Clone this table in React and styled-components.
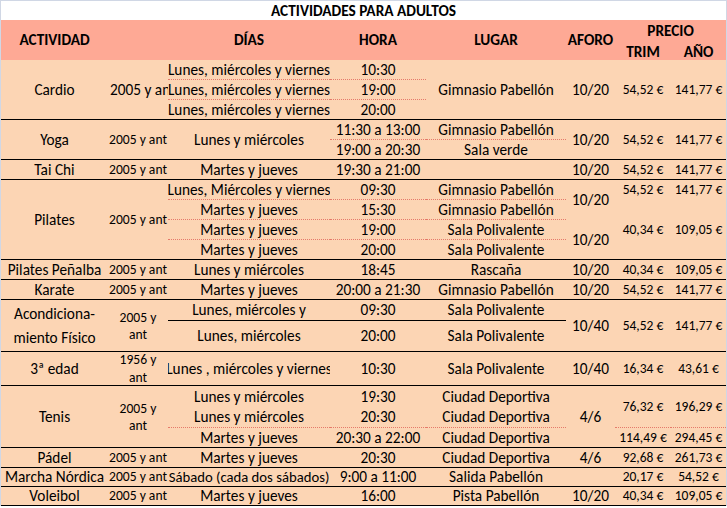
import React from 'react';
import styled, { createGlobalStyle } from 'styled-components';

const Global = createGlobalStyle`
  html, body { margin: 0; padding: 0; background: #ffffff; }
  body { font-family: "Carlito", "Lato", sans-serif; color: #000; }
`;

const Sheet = styled.div`
  width: 727px;
  box-sizing: border-box;
  border-top: 1px solid #d0d7e5;
  border-left: 1px solid #d0d7e5;
  border-right: 1px solid #d0d7e5;
  display: grid;
  grid-template-columns: 107px 60px 162px 96px 140px 49px 56px 55px;
  grid-template-rows:
    19px 20px 20px
    20px 20px 20px
    20px 20px
    20px
    20px 20px 20px 20px
    20px
    20px
    21px 31px
    34px
    21px 21px 20px
    20px
    19px
    19px;
  background: #fcd5b4;
`;

const Cell = styled.div`
  grid-column: ${(p) => p.$c} / span ${(p) => p.$cs || 1};
  grid-row: ${(p) => p.$r} / span ${(p) => p.$rs || 1};
  display: flex;
  align-items: center;
  justify-content: center;
  box-sizing: border-box;
  overflow: hidden;
  white-space: nowrap;
  font-size: 15.3px;
  line-height: 1;
`;

const TitleCell = styled(Cell)`
  background: #ffffff;
  font-weight: 700;
`;

const HeadCell = styled(Cell)`
  background: #fea995;
  font-weight: 700;
  align-items: ${(p) => (p.$pos === 'top' ? 'flex-end' : p.$pos === 'bottom' ? 'flex-start' : 'center')};
  padding-bottom: ${(p) => (p.$pos === 'top' ? '2px' : '0')};
  padding-top: ${(p) => (p.$pos === 'bottom' ? '4px' : '0')};
`;

const lineStyle = (l) =>
  l === 'solid'
    ? '1px solid #000'
    : l === 'dot'
    ? '1px dotted #e57a6a'
    : 'none';

const sizes = { sm: '13.5px', md: '13.6px', fit: '14.7px' };

const BodyCell = styled(Cell)`
  border-bottom: ${(p) => lineStyle(p.$line)};
  font-size: ${(p) => sizes[p.$size] || '15.3px'};
  justify-content: ${(p) => (p.$align === 'left' ? 'flex-start' : 'center')};
  padding-left: ${(p) => (p.$align === 'left' ? '2px' : '0')};
`;

const Lines = styled.div`
  display: flex;
  flex-direction: column;
  align-items: center;
  line-height: ${(p) => p.$lh}px;
`;

// c: column, r: row, t: text, rs/cs: spans, l: bottom line, s: size, lh: line height for wrapped text, a: alignment
const rows = [
  // Cardio
  { c: 1, r: 4, rs: 3, t: 'Cardio', l: 'solid' },
  { c: 2, r: 4, rs: 3, t: '2005 y ant', l: 'solid', a: 'left' },
  { c: 3, r: 4, t: 'Lunes, miércoles y viernes', l: 'dot' },
  { c: 3, r: 5, t: 'Lunes, miércoles y viernes', l: 'dot' },
  { c: 3, r: 6, t: 'Lunes, miércoles y viernes', l: 'solid' },
  { c: 4, r: 4, t: '10:30', l: 'dot' },
  { c: 4, r: 5, t: '19:00', l: 'dot' },
  { c: 4, r: 6, t: '20:00', l: 'solid' },
  { c: 5, r: 4, rs: 3, t: 'Gimnasio Pabellón', l: 'solid' },
  { c: 6, r: 4, rs: 3, t: '10/20', l: 'solid' },
  { c: 7, r: 4, rs: 3, t: '54,52 €', l: 'solid', s: 'sm' },
  { c: 8, r: 4, rs: 3, t: '141,77 €', l: 'solid', s: 'sm' },
  // Yoga
  { c: 1, r: 7, rs: 2, t: 'Yoga', l: 'solid' },
  { c: 2, r: 7, rs: 2, t: '2005 y ant', l: 'solid', s: 'md' },
  { c: 3, r: 7, rs: 2, t: 'Lunes y miércoles', l: 'solid' },
  { c: 4, r: 7, t: '11:30 a 13:00', l: 'dot' },
  { c: 4, r: 8, t: '19:00 a 20:30', l: 'solid' },
  { c: 5, r: 7, t: 'Gimnasio Pabellón', l: 'dot' },
  { c: 5, r: 8, t: 'Sala verde', l: 'solid' },
  { c: 6, r: 7, rs: 2, t: '10/20', l: 'solid' },
  { c: 7, r: 7, rs: 2, t: '54,52 €', l: 'solid', s: 'sm' },
  { c: 8, r: 7, rs: 2, t: '141,77 €', l: 'solid', s: 'sm' },
  // Tai Chi
  { c: 1, r: 9, t: 'Tai Chi', l: 'solid' },
  { c: 2, r: 9, t: '2005 y ant', l: 'solid', s: 'md' },
  { c: 3, r: 9, t: 'Martes y jueves', l: 'solid' },
  { c: 4, r: 9, t: '19:30 a 21:00', l: 'solid' },
  { c: 5, r: 9, t: '', l: 'solid' },
  { c: 6, r: 9, t: '10/20', l: 'solid' },
  { c: 7, r: 9, t: '54,52 €', l: 'solid', s: 'sm' },
  { c: 8, r: 9, t: '141,77 €', l: 'solid', s: 'sm' },
  // Pilates
  { c: 1, r: 10, rs: 4, t: 'Pilates', l: 'solid' },
  { c: 2, r: 10, rs: 4, t: '2005 y ant', l: 'solid', s: 'md' },
  { c: 3, r: 10, t: 'Lunes, Miércoles y viernes', l: 'dot' },
  { c: 3, r: 11, t: 'Martes y jueves', l: 'dot' },
  { c: 3, r: 12, t: 'Martes y jueves', l: 'dot' },
  { c: 3, r: 13, t: 'Martes y jueves', l: 'solid' },
  { c: 4, r: 10, t: '09:30', l: 'dot' },
  { c: 4, r: 11, t: '15:30', l: 'dot' },
  { c: 4, r: 12, t: '19:00', l: 'dot' },
  { c: 4, r: 13, t: '20:00', l: 'solid' },
  { c: 5, r: 10, t: 'Gimnasio Pabellón', l: 'dot' },
  { c: 5, r: 11, t: 'Gimnasio Pabellón', l: 'dot' },
  { c: 5, r: 12, t: 'Sala Polivalente', l: 'dot' },
  { c: 5, r: 13, t: 'Sala Polivalente', l: 'solid' },
  { c: 6, r: 10, rs: 2, t: '10/20' },
  { c: 6, r: 12, rs: 2, t: '10/20', l: 'solid' },
  { c: 7, r: 10, t: '54,52 €', s: 'sm' },
  { c: 8, r: 10, t: '141,77 €', s: 'sm' },
  { c: 7, r: 11, t: '', s: 'sm' },
  { c: 8, r: 11, t: '', s: 'sm' },
  { c: 7, r: 12, t: '40,34 €', s: 'sm' },
  { c: 8, r: 12, t: '109,05 €', s: 'sm' },
  { c: 7, r: 13, t: '', l: 'solid', s: 'sm' },
  { c: 8, r: 13, t: '', l: 'solid', s: 'sm' },
  // Pilates Peñalba
  { c: 1, r: 14, t: 'Pilates Peñalba', l: 'solid' },
  { c: 2, r: 14, t: '2005 y ant', l: 'solid', s: 'md' },
  { c: 3, r: 14, t: 'Lunes y miércoles', l: 'solid' },
  { c: 4, r: 14, t: '18:45', l: 'solid' },
  { c: 5, r: 14, t: 'Rascaña', l: 'solid' },
  { c: 6, r: 14, t: '10/20', l: 'solid' },
  { c: 7, r: 14, t: '40,34 €', l: 'solid', s: 'sm' },
  { c: 8, r: 14, t: '109,05 €', l: 'solid', s: 'sm' },
  // Karate
  { c: 1, r: 15, t: 'Karate', l: 'solid' },
  { c: 2, r: 15, t: '2005 y ant', l: 'solid', s: 'md' },
  { c: 3, r: 15, t: 'Martes y jueves', l: 'solid' },
  { c: 4, r: 15, t: '20:00 a 21:30', l: 'solid' },
  { c: 5, r: 15, t: 'Gimnasio Pabellón', l: 'solid' },
  { c: 6, r: 15, t: '10/20', l: 'solid' },
  { c: 7, r: 15, t: '54,52 €', l: 'solid', s: 'sm' },
  { c: 8, r: 15, t: '141,77 €', l: 'solid', s: 'sm' },
  // Acondicionamiento Físico
  { c: 1, r: 16, rs: 2, t: ['Acondiciona-', 'miento Físico'], lh: 24, l: 'solid' },
  { c: 2, r: 16, rs: 2, t: ['2005 y', 'ant'], lh: 17, l: 'solid', s: 'md' },
  { c: 3, r: 16, t: 'Lunes, miércoles y', l: 'solid' },
  { c: 4, r: 16, t: '09:30', l: 'solid' },
  { c: 5, r: 16, t: 'Sala Polivalente', l: 'solid' },
  { c: 3, r: 17, t: 'Lunes, miércoles', l: 'solid' },
  { c: 4, r: 17, t: '20:00', l: 'solid' },
  { c: 5, r: 17, t: 'Sala Polivalente', l: 'solid' },
  { c: 6, r: 16, rs: 2, t: '10/40', l: 'solid' },
  { c: 7, r: 16, rs: 2, t: '54,52 €', l: 'solid', s: 'sm' },
  { c: 8, r: 16, rs: 2, t: '141,77 €', l: 'solid', s: 'sm' },
  // 3ª edad
  { c: 1, r: 18, t: '3ª edad', l: 'solid' },
  { c: 2, r: 18, t: ['1956 y', 'ant'], lh: 18, l: 'solid', s: 'md' },
  { c: 3, r: 18, t: 'Lunes , miércoles y viernes', l: 'solid' },
  { c: 4, r: 18, t: '10:30', l: 'solid' },
  { c: 5, r: 18, t: 'Sala Polivalente', l: 'solid' },
  { c: 6, r: 18, t: '10/40', l: 'solid' },
  { c: 7, r: 18, t: '16,34 €', l: 'solid', s: 'sm' },
  { c: 8, r: 18, t: '43,61 €', l: 'solid', s: 'sm' },
  // Tenis
  { c: 1, r: 19, rs: 3, t: 'Tenis', l: 'solid' },
  { c: 2, r: 19, rs: 3, t: ['2005 y', 'ant'], lh: 17, l: 'solid', s: 'md' },
  { c: 3, r: 19, t: 'Lunes y miércoles' },
  { c: 4, r: 19, t: '19:30' },
  { c: 5, r: 19, t: 'Ciudad Deportiva' },
  { c: 3, r: 20, t: 'Lunes y miércoles', l: 'dot' },
  { c: 4, r: 20, t: '20:30', l: 'dot' },
  { c: 5, r: 20, t: 'Ciudad Deportiva', l: 'dot' },
  { c: 3, r: 21, t: 'Martes y jueves', l: 'solid' },
  { c: 4, r: 21, t: '20:30 a 22:00', l: 'solid' },
  { c: 5, r: 21, t: 'Ciudad Deportiva', l: 'solid' },
  { c: 6, r: 19, rs: 3, t: '4/6', l: 'solid' },
  { c: 7, r: 19, rs: 2, t: '76,32 €', l: 'dot', s: 'sm' },
  { c: 8, r: 19, rs: 2, t: '196,29 €', l: 'dot', s: 'sm' },
  { c: 7, r: 21, t: '114,49 €', l: 'solid', s: 'sm' },
  { c: 8, r: 21, t: '294,45 €', l: 'solid', s: 'sm' },
  // Pádel
  { c: 1, r: 22, t: 'Pádel', l: 'solid' },
  { c: 2, r: 22, t: '2005 y ant', l: 'solid', s: 'md' },
  { c: 3, r: 22, t: 'Martes y jueves', l: 'solid' },
  { c: 4, r: 22, t: '20:30', l: 'solid' },
  { c: 5, r: 22, t: 'Ciudad Deportiva', l: 'solid' },
  { c: 6, r: 22, t: '4/6', l: 'solid' },
  { c: 7, r: 22, t: '92,68 €', l: 'solid', s: 'sm' },
  { c: 8, r: 22, t: '261,73 €', l: 'solid', s: 'sm' },
  // Marcha Nórdica
  { c: 1, r: 23, t: 'Marcha Nórdica', l: 'solid' },
  { c: 2, r: 23, t: '2005 y ant', l: 'solid', s: 'md' },
  { c: 3, r: 23, t: 'Sábado (cada dos sábados)', l: 'solid', s: 'fit' },
  { c: 4, r: 23, t: '9:00 a 11:00', l: 'solid' },
  { c: 5, r: 23, t: 'Salida Pabellón', l: 'solid' },
  { c: 6, r: 23, t: '', l: 'solid' },
  { c: 7, r: 23, t: '20,17 €', l: 'solid', s: 'sm' },
  { c: 8, r: 23, t: '54,52 €', l: 'solid', s: 'sm' },
  // Voleibol
  { c: 1, r: 24, t: 'Voleibol', l: 'solid' },
  { c: 2, r: 24, t: '2005 y ant', l: 'solid', s: 'md' },
  { c: 3, r: 24, t: 'Martes y jueves', l: 'solid' },
  { c: 4, r: 24, t: '16:00', l: 'solid' },
  { c: 5, r: 24, t: 'Pista Pabellón', l: 'solid' },
  { c: 6, r: 24, t: '10/20', l: 'solid' },
  { c: 7, r: 24, t: '40,34 €', l: 'solid', s: 'sm' },
  { c: 8, r: 24, t: '109,05 €', l: 'solid', s: 'sm' },
];

const heads = [
  { c: 1, t: 'ACTIVIDAD' },
  { c: 2, t: '' },
  { c: 3, t: 'DÍAS' },
  { c: 4, t: 'HORA' },
  { c: 5, t: 'LUGAR' },
  { c: 6, t: 'AFORO' },
];

export default function App() {
  return (
    <>
      <Global />
      <Sheet>
        <TitleCell $c={1} $cs={8} $r={1}>ACTIVIDADES PARA ADULTOS</TitleCell>
        {heads.map((h) => (
          <HeadCell key={h.c} $c={h.c} $r={2} $rs={2}>
            {h.t}
          </HeadCell>
        ))}
        <HeadCell $c={7} $cs={2} $r={2} $pos="top">PRECIO</HeadCell>
        <HeadCell $c={7} $r={3} $pos="bottom">TRIM</HeadCell>
        <HeadCell $c={8} $r={3} $pos="bottom">AÑO</HeadCell>
        {rows.map((d, i) => (
          <BodyCell
            key={i}
            $c={d.c}
            $r={d.r}
            $rs={d.rs}
            $cs={d.cs}
            $line={d.l}
            $size={d.s}
            $align={d.a}
          >
            {Array.isArray(d.t) ? (
              <Lines $lh={d.lh}>
                {d.t.map((x) => (
                  <span key={x}>{x}</span>
                ))}
              </Lines>
            ) : (
              d.t
            )}
          </BodyCell>
        ))}
      </Sheet>
    </>
  );
}
